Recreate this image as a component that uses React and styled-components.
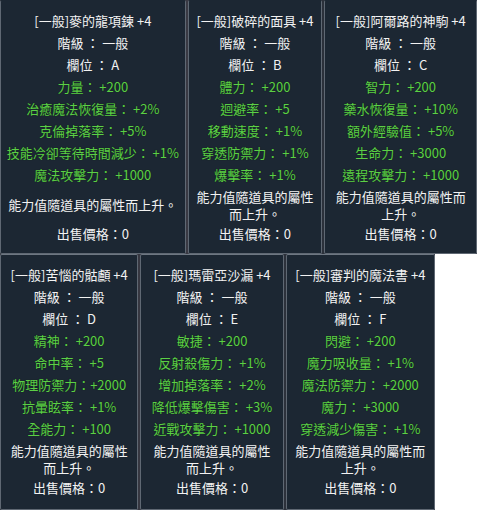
import React from 'react';
import styled, { createGlobalStyle } from 'styled-components';

const GlobalStyle = createGlobalStyle`
  html, body {
    margin: 0;
    padding: 0;
    background: #ffffff;
  }
  body {
    font-family: "Noto Sans CJK TC", "Noto Sans", sans-serif;
  }
`;

const Sheet = styled.div`
  width: 480px;
  height: 510px;
  display: flex;
  flex-direction: column;
  overflow: hidden;
`;

const Row = styled.div`
  display: flex;
  gap: ${p => p.$gap}px;
  height: ${p => p.$height}px;
  width: ${p => p.$width}px;
  background: linear-gradient(90deg, #2b2f38 0%, #3a3a44 40%, #2a303a 70%, #333845 100%);
`;

const Panel = styled.div`
  box-sizing: border-box;
  width: ${p => p.$width}px;
  height: 100%;
  background: #1c2733;
  border: 1px solid #5f6873;
  border-top-color: ${p => (p.$top ? '#1c2733' : '#6e7782')};
  border-radius: 2px;
  padding: 9px 0 0;
  display: flex;
  flex-direction: column;
  align-items: center;
  color: #f2f2f2;
  font-size: 13px;
  text-align: center;
`;

const Line = styled.div`
  height: 22px;
  line-height: 22px;
  white-space: nowrap;
  color: ${p => (p.$green ? '#5ccf47' : '#f2f2f2')};
  text-shadow: ${p => (p.$green ? '0 0 1px #0e2a0a' : 'none')};
`;

const Desc = styled.div`
  height: 37px;
  display: flex;
  align-items: center;
  justify-content: center;
  line-height: 17px;
  padding: 0 6px;
`;

const panels = [
  {
    w: 186, title: '[一般]麥的龍項鍊 +4', slot: 'A',
    stats: ['力量： +200', '治癒魔法恢復量： +2%', '克倫掉落率： +5%', '技能冷卻等待時間減少： +1%', '魔法攻擊力： +1000'],
  },
  {
    w: 135, title: '[一般]破碎的面具 +4', slot: 'B',
    stats: ['體力： +200', '迴避率： +5', '移動速度： +1%', '穿透防禦力： +1%', '爆擊率： +1%'],
  },
  {
    w: 153, title: '[一般]阿爾路的神駒 +4', slot: 'C',
    stats: ['智力： +200', '藥水恢復量： +10%', '額外經驗值： +5%', '生命力： +3000', '遠程攻擊力： +1000'],
  },
  {
    w: 139, title: '[一般]苦惱的骷顱 +4', slot: 'D',
    stats: ['精神： +200', '命中率： +5', '物理防禦力：+2000', '抗暈眩率： +1%', '全能力： +100'],
  },
  {
    w: 144, title: '[一般]瑪雷亞沙漏 +4', slot: 'E',
    stats: ['敏捷： +200', '反射殺傷力： +1%', '增加掉落率： +2%', '降低爆擊傷害： +3%', '近戰攻擊力： +1000'],
  },
  {
    w: 150, title: '[一般]審判的魔法書 +4', slot: 'F',
    stats: ['閃避： +200', '魔力吸收量： +1%', '魔法防禦力： +2000', '魔力： +3000', '穿透減少傷害： +1%'],
  },
];

const Tooltip = ({ item, top }) => (
  <Panel $width={item.w} $top={top}>
    <Line>{item.title}</Line>
    <Line>階級 ： 一般</Line>
    <Line>欄位 ： {item.slot}</Line>
    {item.stats.map(s => (
      <Line key={s} $green>{s}</Line>
    ))}
    <Desc>能力值隨道具的屬性而上升。</Desc>
    <Line>出售價格：0</Line>
  </Panel>
);

export default function App() {
  return (
    <Sheet>
      <GlobalStyle />
      <Row $height={254} $width={477} $gap={2}>
        {panels.slice(0, 3).map(p => (
          <Tooltip key={p.slot} item={p} top />
        ))}
      </Row>
      <Row $height={256} $width={435} $gap={2}>
        {panels.slice(3).map(p => (
          <Tooltip key={p.slot} item={p} />
        ))}
      </Row>
    </Sheet>
  );
}
